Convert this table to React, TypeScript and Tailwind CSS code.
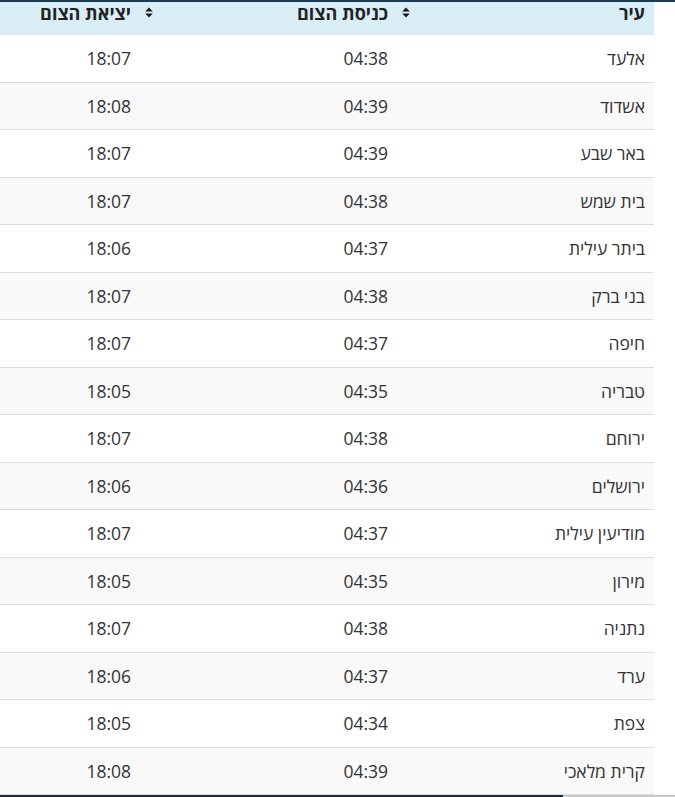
import React from "react";

const rows: [string, string, string][] = [
  ["אלעד", "04:38", "18:07"],
  ["אשדוד", "04:39", "18:08"],
  ["באר שבע", "04:39", "18:07"],
  ["בית שמש", "04:38", "18:07"],
  ["ביתר עילית", "04:37", "18:06"],
  ["בני ברק", "04:38", "18:07"],
  ["חיפה", "04:37", "18:07"],
  ["טבריה", "04:35", "18:05"],
  ["ירוחם", "04:38", "18:07"],
  ["ירושלים", "04:36", "18:06"],
  ["מודיעין עילית", "04:37", "18:07"],
  ["מירון", "04:35", "18:05"],
  ["נתניה", "04:38", "18:07"],
  ["ערד", "04:37", "18:06"],
  ["צפת", "04:34", "18:05"],
  ["קרית מלאכי", "04:39", "18:08"],
];

function SortIcon() {
  return (
    <svg
      className="absolute right-[5px] top-[5px]"
      width="8"
      height="11"
      viewBox="0 0 8 11"
    >
      <path d="M4 0.5 L7.8 4.6 L0.2 4.6 Z" fill="#1a1a1a" />
      <path d="M4 10.5 L7.8 6.4 L0.2 6.4 Z" fill="#1a1a1a" />
    </svg>
  );
}

export default function App() {
  return (
    <div
      className="w-[675px] h-[797px] bg-white overflow-hidden flex flex-col"
      style={{ fontFamily: '"Open Sans", "Noto Sans", "DejaVu Sans", sans-serif' }}
    >
      <div className="h-[2px] w-full bg-[#1d3a55] shrink-0" />
      <div className="w-[654px] shrink-0" dir="rtl">
        <div className="grid grid-cols-[239px_257px_158px] h-[33px] bg-[#d9edf7] border-b border-[#e2e6e8] text-[18px] font-bold text-[#222] leading-[22px]">
          <div className="pr-[9px] text-right">עיר</div>
          <div className="relative pr-[27px] text-right">
            <SortIcon />
            כניסת הצום
          </div>
          <div className="relative pr-[27px] text-right">
            <SortIcon />
            יציאת הצום
          </div>
        </div>
        {rows.map((r, i) => (
          <div
            key={r[0]}
            className={
              "grid grid-cols-[239px_257px_158px] h-[47.5px] items-center border-b border-[#dddddd] text-[17.5px] text-[#333] leading-[22px] " +
              (i % 2 === 1 ? "bg-[#f9f9f9]" : "bg-white")
            }
          >
            <div className="pr-[9px] text-right">{r[0]}</div>
            <div className="pr-[27px] text-right">{r[1]}</div>
            <div className="pr-[27px] text-right">{r[2]}</div>
          </div>
        ))}
      </div>
      <div className="flex h-[2px] w-full shrink-0">
        <div className="w-[563px] bg-[#1e2a38]" />
        <div className="flex-1 bg-[#c9c9c9]" />
      </div>
    </div>
  );
}
